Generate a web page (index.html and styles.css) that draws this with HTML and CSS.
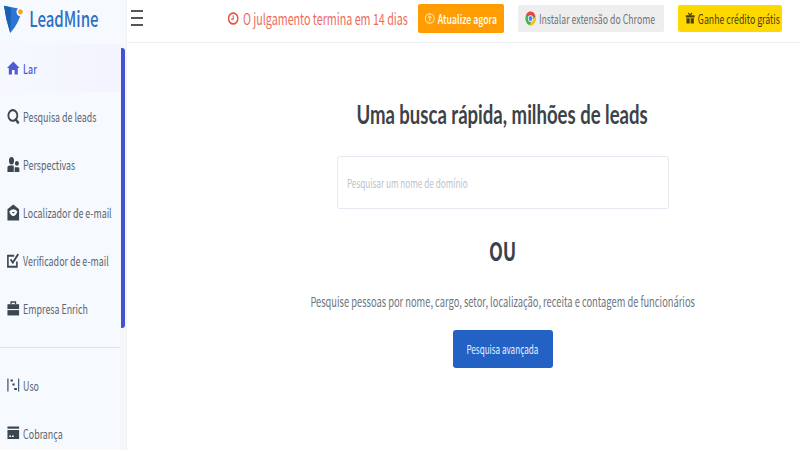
FILE: index.html
```html
<!DOCTYPE html>
<html lang="pt">

<head>
    <meta charset="UTF-8">
    <meta name="viewport" content="width=device-width, initial-scale=1.0">
    <title>LeadMine</title>

    <link rel="stylesheet" href="styles.css">

</head>

<body>
    <aside class="sidebar">
        <div class="logo">
            <span class="squeeze squeeze-left logo-inner">
                <svg width="29" height="30" viewBox="0 0 26 34" preserveAspectRatio="none">
                    <path d="M0 3 L23 7 Q20 22 8 34 Q2 18 0 3 Z" fill="#2a76d2" />
                    <path d="M0 3 L9 5 L8 34 Q2 18 0 3 Z" fill="#1b5fb5" />
                    <circle cx="21" cy="10" r="5" fill="#fff" />
                    <circle cx="21" cy="10" r="3" fill="#f6a623" />
                </svg>
                <span class="logo-text">LeadMine</span>
            </span>
        </div>

        <div class="menu-rail">
            <nav class="menu">
                <a href="#" class="menu-item active">
                    <span class="squeeze squeeze-left">
                        <svg width="18" height="14" viewBox="0 0 14 14" preserveAspectRatio="none"><path d="M7 0.500 L0 7 H2 V13.500 H5.500 V9 H8.500 V13.500 H12 V7 H14 Z" fill="#4f5bd5" /></svg>
                        Lar
                    </span>
                </a>
                <a href="#" class="menu-item">
                    <span class="squeeze squeeze-left">
                        <svg width="18" height="15" viewBox="0 0 14 14" preserveAspectRatio="none"><circle cx="6.500" cy="6" r="5" fill="none" stroke="#3c4650" stroke-width="2" /><path d="M9 9 L13 13.500" stroke="#3c4650" stroke-width="2.400" /></svg>
                        Pesquisa de leads
                    </span>
                </a>
                <a href="#" class="menu-item">
                    <span class="squeeze squeeze-left">
                        <svg width="18" height="15" viewBox="0 0 14 14" preserveAspectRatio="none"><ellipse cx="5" cy="3.500" rx="2.800" ry="3.500" fill="#3c4650" /><circle cx="11" cy="6" r="2.200" fill="#3c4650" /><path d="M0.500 14 V9.500 Q0.500 8 3 8 H7.500 V14 Z M8.500 14 V9.500 H12.500 Q14 9.500 14 11 V14 Z" fill="#3c4650" /></svg>
                        Perspectivas
                    </span>
                </a>
                <a href="#" class="menu-item">
                    <span class="squeeze squeeze-left">
                        <svg width="18" height="17" viewBox="0 0 14 16" preserveAspectRatio="none"><path d="M0.500 5 L7 0.500 L13.500 5 V15.500 H0.500 Z" fill="#3c4650" /><path d="M2.500 7 Q7 3 11.500 7 Q10 11 7 11.500 Q4 11 2.500 7 Z" fill="#f6f9fe" /><path d="M5 7.500 H9 L7 9 Z" fill="#3c4650" /></svg>
                        Localizador de e-mail
                    </span>
                </a>
                <a href="#" class="menu-item">
                    <span class="squeeze squeeze-left">
                        <svg width="18" height="15" viewBox="0 0 14 14" preserveAspectRatio="none"><path d="M11 8 V12.800 H1 V2.500 H8" fill="none" stroke="#3c4650" stroke-width="1.800" /><path d="M4 6 L6.500 9 L12.500 1" fill="none" stroke="#3c4650" stroke-width="2" /></svg>
                        Verificador de e-mail
                    </span>
                </a>
                <a href="#" class="menu-item">
                    <span class="squeeze squeeze-left">
                        <svg width="18" height="15" viewBox="0 0 14 14" preserveAspectRatio="none"><path d="M4.500 3 V1 H9.500 V3" fill="none" stroke="#3c4650" stroke-width="1.400" /><rect x="0.500" y="3" width="13" height="4.500" fill="#3c4650" /><rect x="0.500" y="8.500" width="13" height="5" fill="#3c4650" /></svg>
                        Empresa Enrich
                    </span>
                </a>
            </nav>
        </div>

        <hr class="menu-line">

        <nav class="menu">
            <a href="#" class="menu-item">
                <span class="squeeze squeeze-left">
                    <svg width="18" height="14" viewBox="0 0 14 14" preserveAspectRatio="none"><path d="M1 0.500 V13.500 M13 0.500 V13.500" stroke="#47617a" stroke-width="1.500" /><path d="M4 1.500 H6.500 V3.500 H4 Z M6 5.500 H8.500 V7.500 H6 Z M8 10 H11 V12 H8 Z" fill="#3c4650" /></svg>
                    Uso
                </span>
            </a>
            <a href="#" class="menu-item">
                <span class="squeeze squeeze-left">
                    <svg width="18" height="14" viewBox="0 0 14 14" preserveAspectRatio="none"><rect x="0.500" y="0.500" width="13" height="2.200" fill="#3c4650" /><path d="M0.500 4 H13.500 V13 H0.500 Z" fill="#3c4650" /><path d="M2.500 9.500 H4.500 V11 H2.500 Z M5.500 9.500 H7.500 V11 H5.500 Z" fill="#f6f9fe" /></svg>
                    Cobrança
                </span>
            </a>
        </nav>
    </aside>

    <div class="page">
        <header class="topbar">
            <button class="burger" aria-label="menu"><span></span><span></span><span></span></button>

            <div class="top-actions">
                <div class="trial">
                    <span class="squeeze trial-inner">
                        <svg width="16" height="13" viewBox="0 0 12 12" preserveAspectRatio="none"><circle cx="6" cy="6" r="5" fill="none" stroke="#e9503f" stroke-width="1.600" /><path d="M6 3 V6.500 H3.800" fill="none" stroke="#e9503f" stroke-width="1.100" /></svg>
                        O julgamento termina em 14 dias
                    </span>
                </div>
                <a href="#" class="top-btn upgrade">
                    <span class="squeeze">
                        <svg width="15" height="11" viewBox="0 0 10 10" preserveAspectRatio="none"><circle cx="5" cy="5" r="4.200" fill="none" stroke="#ffe3b0" stroke-width="1" /><path d="M5 7.500 V3 M3.300 4.500 L5 2.800 L6.700 4.500" fill="none" stroke="#ffe3b0" stroke-width="1" /></svg>
                        Atualize agora
                    </span>
                </a>
                <a href="#" class="top-btn chrome">
                    <span class="squeeze">
                        <svg width="16" height="15" viewBox="0 0 12 12" preserveAspectRatio="none">
                            <circle cx="6" cy="6" r="5.500" fill="#4caf50" />
                            <path d="M1.200 3.300 A5.500 5.500 0 0 1 11.300 4.400 H6 Z" fill="#e8453c" />
                            <path d="M11.300 4.400 A5.500 5.500 0 0 1 5 11.400 L7.800 7 Z" fill="#fbc02d" />
                            <circle cx="6" cy="6" r="2.700" fill="#fff" />
                            <circle cx="6" cy="6" r="2" fill="#4285f4" />
                        </svg>
                        Instalar extensão do Chrome
                    </span>
                </a>
                <a href="#" class="top-btn credit">
                    <span class="squeeze">
                        <svg width="14" height="12" viewBox="0 0 10 11" preserveAspectRatio="none"><path d="M0.500 3 H9.500 V5 H0.500 Z M1.200 5.800 H4.500 V10.500 H1.200 Z M5.500 5.800 H8.800 V10.500 H5.500 Z" fill="#4a3f10" /><path d="M5 3 L3 0.800 M5 3 L7 0.800" stroke="#4a3f10" stroke-width="1.200" /></svg>
                        Ganhe crédito grátis
                    </span>
                </a>
            </div>
        </header>

        <main class="content">
            <h1 class="title squeeze">Uma busca rápida, milhões de leads</h1>
            <input class="domain-input" type="text" placeholder="Pesquisar um nome de domínio">
            <h2 class="or squeeze">OU</h2>
            <p class="hint squeeze">Pesquise pessoas por nome, cargo, setor, localização, receita e contagem de funcionários</p>
            <a href="#" class="advanced"><span class="squeeze">Pesquisa avançada</span></a>
        </main>
    </div>
</body>

</html>
```

FILE: styles.css
```css
* {
    margin: 0;
    padding: 0;
    box-sizing: border-box;
    font-family: "Noto Sans CJK SC", "Noto Sans", sans-serif;
}

body {
    display: flex;
    height: 100vh;
    overflow: hidden;
    background: #fff;
    color: #3c4650;
}

a {
    text-decoration: none;
}

/* all the type in this page is condensed */
.squeeze {
    display: inline-flex;
    align-items: center;
    flex-shrink: 0;
    gap: 4px;
    white-space: nowrap;
    transform: scaleX(0.7);
}

.squeeze-left {
    transform-origin: left center;
}

.sidebar {
    width: 127px;
    flex-shrink: 0;
    background: linear-gradient(#f6f7f8, #f6f7f8) right 44px / 6px 100% no-repeat, #f6f9fe;
    border-right: 1px solid #f1f2f3;
}

.logo {
    display: flex;
    align-items: center;
    height: 44px;
    padding: 0 0 9px 4px;
}

.logo-inner {
    gap: 7px;
}

.logo-text {
    font-size: 21.5px;
    font-weight: 500;
    color: #2f6fc6;
}

.menu-rail {
    display: flex;
    flex-direction: column;
    height: 280px;
    margin-top: 4px;
    margin-right: 1px;
    border-right: 4px solid #4353cf;
    border-radius: 0 3px 3px 0;
}

.menu {
    display: flex;
    flex-direction: column;
}

.menu-rail .menu {
    margin-top: -4px;
}

.menu-item {
    display: flex;
    align-items: center;
    height: 48px;
    padding-left: 7px;
    font-size: 12.7px;
    color: #5c6670;
}

.menu-item .squeeze {
    gap: 5px;
}

.menu-item svg {
    flex-shrink: 0;
}

.menu-item.active {
    color: #4f5bd5;
    font-weight: 500;
    background: linear-gradient(90deg, #f6f9fe, #f3f4fe);
}

.menu-line {
    border: 0;
    border-top: 1px solid #dfe2e4;
    margin: 19px 6px 13px 0;
}

.page {
    flex: 1;
    display: flex;
    flex-direction: column;
    min-width: 0;
}

.topbar {
    display: flex;
    align-items: center;
    justify-content: space-between;
    height: 43px;
    flex-shrink: 0;
    border-bottom: 1px solid #eef0f1;
    padding: 0 18px 6px 4px;
}

.burger {
    display: flex;
    flex-direction: column;
    gap: 5px;
    width: 12px;
    border: 0;
    background: none;
}

.burger span {
    height: 2px;
    background: #555;
}

.top-actions {
    display: flex;
    align-items: center;
    gap: 14px;
}

.trial {
    display: flex;
    justify-content: center;
    width: 181px;
    margin-right: -4px;
    font-size: 15.3px;
    color: #ee6a5c;
}

.trial-inner {
    gap: 6px;
}

.top-btn {
    display: flex;
    align-items: center;
    justify-content: center;
    height: 27px;
    border-radius: 2px;
    font-size: 12.5px;
}

.upgrade {
    width: 86px;
    height: 29px;
    background: #ff9d00;
    color: #fff;
    font-weight: 500;
}

.chrome {
    width: 146px;
    padding-right: 1px;
    background: #eeeeee;
    color: #6e7479;
}

.credit {
    width: 104px;
    padding-left: 6px;
    background: #ffd800;
    color: #4a3f10;
}

.content {
    display: flex;
    flex-direction: column;
    align-items: center;
    padding: 53px 0 0 78px;
}

.title {
    font-family: "Lato", sans-serif;
    font-size: 26.5px;
    font-weight: 700;
    line-height: 36px;
    color: #3b4249;
}

.domain-input {
    flex-shrink: 0;
    width: 474px;
    height: 53px;
    margin-top: 24px;
    padding: 0 13px;
    border: 1px solid #e1e5ee;
    border-radius: 3px;
    font-size: 11.7px;
    outline: none;
    transform: scaleX(0.7);
}

.domain-input::placeholder {
    color: #bcc3cb;
}

.or {
    font-size: 25.8px;
    font-weight: 700;
    line-height: 30px;
    margin-top: 26px;
    color: #3b4249;
}

.hint {
    font-size: 13.33px;
    line-height: 20px;
    margin-top: 27px;
    color: #6c757d;
}

.advanced {
    display: flex;
    align-items: center;
    justify-content: center;
    width: 100px;
    height: 38px;
    margin-top: 18px;
    border-radius: 3px;
    background: #2361c5;
    color: #e9f0fb;
    font-size: 11.6px;
}
```
